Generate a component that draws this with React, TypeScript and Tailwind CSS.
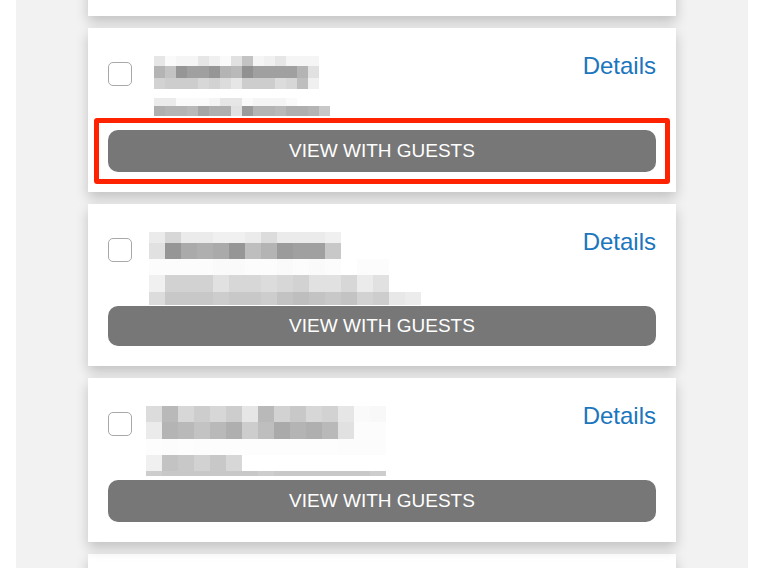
type Row = { h: number; cells: number[] };

type Mosaic = { left: number; cell: number; rows: Row[] };

type CardData = { mosaic: Mosaic; btnH: number; highlighted?: boolean };

const cards: CardData[] = [
  {
    highlighted: true,
    btnH: 42,
    mosaic: {
      left: 22,
      cell: 11,
      rows: [
        { h: 10, cells: [230, 250, 245, 245, 230, 240, 250, 225, 195, 245, 240, 230, 245, 245, 245] },
        { h: 12, cells: [180, 195, 150, 160, 160, 150, 180, 185, 145, 160, 160, 160, 160, 180, 225] },
        { h: 11, cells: [210, 205, 205, 205, 215, 210, 220, 230, 205, 205, 205, 220, 215, 190, 240] },
        { h: 9, cells: [] },
        { h: 8, cells: [235, 235, 250, 250, 250, 245, 230, 230, 250, 245, 245, 245, 250, 255, 255] },
        { h: 10, cells: [175, 180, 180, 185, 165, 175, 175, 225, 155, 180, 180, 185, 175, 175, 180, 200] },
      ],
    },
  },
  {
    btnH: 40,
    mosaic: {
      left: 17,
      cell: 16,
      rows: [
        { h: 11, cells: [235, 215, 235, 235, 240, 240, 235, 220, 235, 235, 235, 240] },
        { h: 16, cells: [225, 150, 170, 175, 170, 150, 190, 180, 155, 160, 160, 200] },
        { h: 16, cells: [252, 252, 252, 252, 250, 250, 252, 252, 250, 252, 250, 252, 255, 252, 252] },
        { h: 17, cells: [240, 210, 210, 210, 225, 215, 215, 220, 215, 210, 225, 225, 215, 235, 225] },
        { h: 13, cells: [220, 200, 200, 200, 205, 200, 200, 205, 195, 190, 195, 200, 195, 210, 205, 232, 236] },
      ],
    },
  },
  {
    btnH: 42,
    mosaic: {
      left: 14,
      cell: 16,
      rows: [
        { h: 16, cells: [220, 185, 215, 205, 215, 205, 230, 185, 210, 200, 215, 210, 230, 250, 248] },
        { h: 17, cells: [235, 180, 185, 195, 185, 175, 205, 190, 170, 180, 175, 185, 225, 252, 252] },
        { h: 16, cells: [253, 252, 253, 252, 253, 253, 253, 253, 253, 253, 253, 253, 252, 252, 252] },
        { h: 16, cells: [240, 195, 200, 210, 200, 215] },
        { h: 5, cells: [205, 200, 200, 200, 200, 200, 200, 205, 200, 200, 200, 200, 200, 200, 205] },
      ],
    },
  },
];

const cardShadow = "shadow-[0_6px_12px_rgba(0,0,0,0.2)]";

function Blurred({ mosaic }: { mosaic: Mosaic }) {
  return (
    <div className="mt-[28px] flex flex-col" style={{ marginLeft: mosaic.left }}>
      {mosaic.rows.map((row, i) => (
        <div key={i} className="flex" style={{ height: row.h }}>
          {row.cells.map((g, j) => (
            <div
              key={j}
              style={{ width: mosaic.cell, background: `rgb(${g},${g},${g})` }}
            />
          ))}
        </div>
      ))}
    </div>
  );
}

function Card({ data }: { data: CardData }) {
  return (
    <div className={`relative flex flex-col bg-white px-5 pb-5 ${cardShadow}`}>
      <div className="flex h-[102px] items-start">
        <div className="mt-[34px] h-6 w-6 shrink-0 rounded-[5px] border-[1.5px] border-[#a8a8a8] bg-white" />
        <Blurred mosaic={data.mosaic} />
        <a className="ml-auto mt-6 text-[24px] leading-[28px] text-[#1b76bd]">Details</a>
      </div>

      <button
        className="flex w-full items-center justify-center rounded-[10px] bg-[#777777] text-[19px] text-white"
        style={{ height: data.btnH }}
      >
        VIEW WITH GUESTS
      </button>

      {data.highlighted && (
        <div className="pointer-events-none absolute left-[6px] top-[90px] h-[66px] w-[576px] rounded-[3px] border-[5px] border-[#ff2200]" />
      )}
    </div>
  );
}

export default function App() {
  return (
    <div
      className="flex h-screen overflow-hidden bg-white pl-4 pr-3"
      style={{ fontFamily: '"Liberation Sans", Arial, sans-serif' }}
    >
      <div className="flex flex-1 flex-col bg-[#f2f2f2]">
        <div className="mx-auto w-[612px] overflow-hidden px-3">
          <div className="-mt-[148px] flex flex-col gap-3">
            {/* cards scrolled off above and below */}
            <div className={`h-[164px] bg-white ${cardShadow}`} />
            {cards.map((c, i) => (
              <Card key={i} data={c} />
            ))}
            <div className={`h-[164px] bg-white ${cardShadow}`} />
          </div>
        </div>
      </div>
    </div>
  );
}
